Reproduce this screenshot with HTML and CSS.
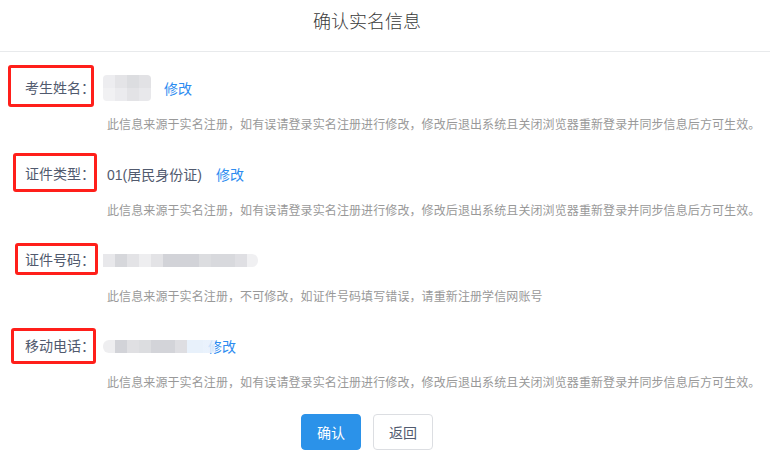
FILE: index.html
```html
<!DOCTYPE html>
<html lang="zh-CN">
<head>
<meta charset="utf-8">
<title>确认实名信息</title>
<link rel="stylesheet" href="styles.css">
</head>
<body>
<div class="header">
  <div class="title">确认实名信息</div>
</div>
<div class="form">
  <div class="item">
    <div class="row">
      <label class="label"><span class="mark mark1"></span>考生姓名：</label>
      <div class="value">
        <span class="blur blur-name"></span>
        <a class="link link-name" href="#">修改</a>
      </div>
    </div>
    <div class="desc">此信息来源于实名注册，如有误请登录实名注册进行修改，修改后退出系统且关闭浏览器重新登录并同步信息后方可生效。</div>
  </div>
  <div class="item">
    <div class="row">
      <label class="label"><span class="mark mark2"></span>证件类型：</label>
      <div class="value">
        <span class="text">01(居民身份证)</span>
        <a class="link link-type" href="#">修改</a>
      </div>
    </div>
    <div class="desc">此信息来源于实名注册，如有误请登录实名注册进行修改，修改后退出系统且关闭浏览器重新登录并同步信息后方可生效。</div>
  </div>
  <div class="item">
    <div class="row">
      <label class="label"><span class="mark mark3"></span>证件号码：</label>
      <div class="value">
        <span class="blur blur-id"></span>
      </div>
    </div>
    <div class="desc">此信息来源于实名注册，不可修改，如证件号码填写错误，请重新注册学信网账号</div>
  </div>
  <div class="item">
    <div class="row">
      <label class="label"><span class="mark mark4"></span>移动电话：</label>
      <div class="value">
        <span class="blur blur-phone"></span>
        <a class="link" href="#">修改</a>
      </div>
    </div>
    <div class="desc">此信息来源于实名注册，如有误请登录实名注册进行修改，修改后退出系统且关闭浏览器重新登录并同步信息后方可生效。</div>
  </div>
  <div class="actions">
    <button class="btn btn-primary" type="button">确认</button>
    <button class="btn btn-default" type="button">返回</button>
  </div>
</div>
</body>
</html>
```

FILE: styles.css
```css
* { box-sizing: border-box; }
html, body {
  margin: 0;
  padding: 0;
  background: #fff;
  font-family: "Liberation Sans", "Noto Sans CJK SC", sans-serif;
  color: #515a6e;
}
.header {
  height: 52px;
  border-bottom: 1px solid #e8eaec;
}
.title {
  width: 734px;
  text-align: center;
  font-size: 18px;
  line-height: 40px;
  color: #3a3a3a;
  font-family: "Noto Sans CJK SC", sans-serif;
  font-weight: 300;
}
.form {
  padding-top: 18px;
}
.item {
  margin-bottom: 22px;
}
.row {
  display: flex;
  align-items: center;
  height: 36px;
}
.label {
  position: relative;
  width: 103px;
  padding-right: 8px;
  text-align: right;
  font-size: 14px;
  color: #515a6e;
  line-height: 36px;
}
.mark {
  position: absolute;
  border: 3px solid #ff1f1a;
  border-radius: 3px;
}
.mark1 { left: 8px; top: -5px; width: 86px; height: 42px; }
.mark2 { left: 13px; top: -3px; width: 84px; height: 39px; }
.mark3 { left: 15px; top: 1px; width: 83px; height: 32px; }
.mark4 { left: 11px; top: 0; width: 85px; height: 36px; }
.value {
  display: flex;
  align-items: center;
  font-size: 14px;
}
.text {
  margin-left: 4px;
  color: #515a6e;
}
.link {
  color: #2d8cf0;
  text-decoration: none;
  font-size: 14px;
}
.link-name { margin-left: 13px; }
.link-type { margin-left: 14px; }
.blur { display: block; position: relative; z-index: 1; }
.blur-name {
  width: 48px;
  height: 26px;
  border-radius: 4px;
  background:
    linear-gradient(90deg, #ededf0 0 12px, #e4e4e7 12px 24px, #dcdde0 24px 36px, #e2e2e5 36px 48px) top / 100% 13px no-repeat,
    linear-gradient(90deg, #f1f1f3 0 12px, #ebebee 12px 24px, #e3e3e6 24px 36px, #e8e8eb 36px 48px) bottom / 100% 13px no-repeat;
}
.blur-id {
  width: 155px;
  height: 13px;
  border-radius: 0 6px 6px 0;
  background: linear-gradient(90deg,
    #e8e8eb 0 12px, #d6d7db 12px 24px, #e3e3e6 24px 36px, #eeeef0 36px 48px,
    #e3e3e6 48px 60px, #d2d3d8 60px 96px, #dcdde0 96px 108px, #d8d9dd 108px 132px,
    #dfdfe3 132px 144px, #f0f0f2 144px 155px);
}
.blur-phone {
  width: 112px;
  height: 13px;
  margin-right: -7px;
  border-radius: 6px 0 0 6px;
  background: linear-gradient(90deg,
    #eeeef0 0 12px, #d2d3d8 12px 24px, #e0e0e3 24px 36px, #dcdde0 36px 48px,
    #d3d4d9 48px 72px, #dedee2 72px 84px, #e8f1fb 84px 100px, rgba(230,240,252,0.85) 100px 112px);
}
.desc {
  margin-top: 8px;
  padding-left: 107px;
  font-size: 12px;
  line-height: 20px;
  color: #999;
  font-family: "Noto Sans CJK SC", sans-serif;
  letter-spacing: 0.1px;
}
.actions {
  width: 734px;
  display: flex;
  justify-content: center;
  gap: 12px;
  margin-top: 3px;
}
.btn {
  width: 60px;
  height: 36px;
  border-radius: 4px;
  font-size: 14px;
  font-family: "Noto Sans CJK SC", sans-serif;
  cursor: pointer;
  padding: 0;
}
.btn-primary {
  background: #2b92e9;
  border: 1px solid #2b92e9;
  color: #fff;
}
.btn-default {
  background: #fff;
  border: 1px solid #dcdee2;
  color: #515a6e;
}
```
